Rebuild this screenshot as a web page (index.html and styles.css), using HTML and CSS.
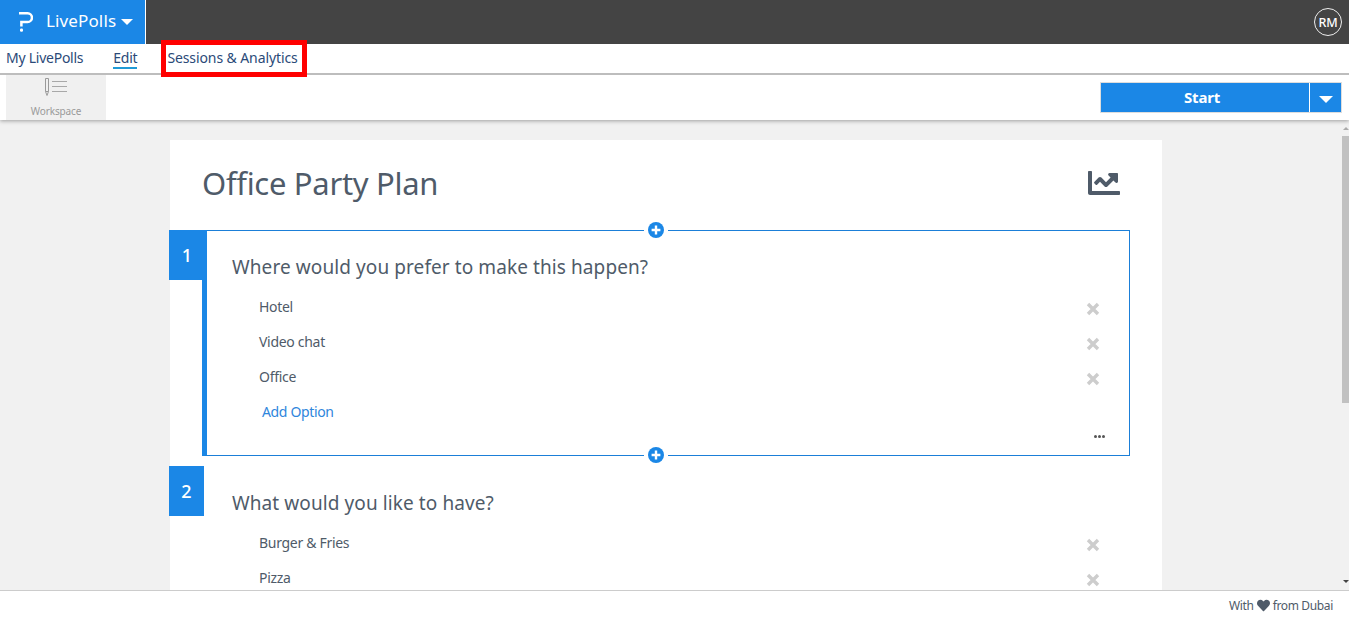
FILE: index.html
```html
<!DOCTYPE html>
<html lang="en">
<head>
<meta charset="utf-8">
<title>Office Party Plan</title>
<link rel="stylesheet" href="styles.css">
</head>
<body>
<div class="page">
  <header class="topbar">
    <div class="brand">
      <svg class="logo" viewBox="0 0 14 20" width="14" height="20"><path d="M0 1.3h8.6a4.3 4.3 0 0 1 0 8.7H2.4v4.6" fill="none" stroke="#fff" stroke-width="2.5"/><rect x="1" y="16.6" width="3" height="3.2" rx="1.2" fill="#fff"/></svg>
      <span class="brand-name">LivePolls</span>
      <span class="brand-caret"></span>
    </div>
    <div class="avatar">RM</div>
  </header>
  <nav class="tabs">
    <a class="tab tab-first">My LivePolls</a>
    <a class="tab tab-active">Edit</a>
    <a class="tab tab-marked">Sessions &amp; Analytics</a>
  </nav>
  <div class="toolbar">
    <div class="workspace">
      <svg class="workspace-icon" viewBox="0 0 24 20" width="24" height="20"><path d="M1.5 1.5h3v13l-1.5 4-1.5-4z" fill="none" stroke="#9a9a9a" stroke-width="1"/><path d="M1.5 14.5h3" stroke="#9a9a9a"/><path d="M8 4.5h15M8 9.5h15M8 14.5h15" stroke="#a8a8a8" stroke-width="1"/></svg>
      <span class="workspace-label">Workspace</span>
    </div>
    <div class="start">
      <button class="start-main">Start</button>
      <button class="start-more"><span class="start-caret"></span></button>
    </div>
  </div>
  <main class="main">
    <div class="content">
      <section class="card">
        <div class="card-head">
          <h1 class="title">Office Party Plan</h1>
          <svg class="chart" viewBox="0 0 512 512" width="32" height="32"><path fill="#4f5b69" d="M496 384H64V80c0-8.84-7.16-16-16-16H16C7.16 64 0 71.16 0 80v336c0 17.67 14.33 32 32 32h464c8.84 0 16-7.16 16-16v-32c0-8.84-7.16-16-16-16zM464 96H345.94c-21.38 0-32.09 25.85-16.97 40.97l32.4 32.4L288 242.75l-73.37-73.37c-12.5-12.5-32.76-12.5-45.25 0l-68.69 68.69c-6.25 6.25-6.25 16.38 0 22.63l22.62 22.62c6.25 6.25 16.38 6.25 22.63 0L192 237.25l73.37 73.37c12.5 12.5 32.76 12.5 45.25 0l96-96 32.4 32.4c15.12 15.12 40.97 4.41 40.97-16.97V112c0-8.84-7.16-16-16-16z"/></svg>
        </div>
        <article class="question question-active">
          <div class="num num-active">1</div>
          <span class="plus plus-top"><svg viewBox="0 0 16 16" width="16" height="16"><circle cx="8" cy="8" r="8" fill="#1b87e6"/><path d="M8 3.6v8.8M3.6 8h8.8" stroke="#fff" stroke-width="2.4"/></svg></span>
          <h2 class="q-title">Where would you prefer to make this happen?</h2>
          <div class="option"><span class="opt-text">Hotel</span><svg class="x" viewBox="0 0 14 14" width="14" height="14"><path d="M2 2l10 10M12 2L2 12" stroke="#cdcdcd" stroke-width="3.4"/></svg></div>
          <div class="option"><span class="opt-text">Video chat</span><svg class="x" viewBox="0 0 14 14" width="14" height="14"><path d="M2 2l10 10M12 2L2 12" stroke="#cdcdcd" stroke-width="3.4"/></svg></div>
          <div class="option"><span class="opt-text">Office</span><svg class="x" viewBox="0 0 14 14" width="14" height="14"><path d="M2 2l10 10M12 2L2 12" stroke="#cdcdcd" stroke-width="3.4"/></svg></div>
          <div class="option"><a class="add-option">Add Option</a></div>
          <div class="q-foot"><span class="dots"></span><span class="dots"></span><span class="dots"></span></div>
          <span class="plus plus-bottom"><svg viewBox="0 0 16 16" width="16" height="16"><circle cx="8" cy="8" r="8" fill="#1b87e6"/><path d="M8 3.6v8.8M3.6 8h8.8" stroke="#fff" stroke-width="2.4"/></svg></span>
        </article>
        <article class="question">
          <div class="num">2</div>
          <h2 class="q-title">What would you like to have?</h2>
          <div class="option"><span class="opt-text">Burger &amp; Fries</span><svg class="x" viewBox="0 0 14 14" width="14" height="14"><path d="M2 2l10 10M12 2L2 12" stroke="#cdcdcd" stroke-width="3.4"/></svg></div>
          <div class="option"><span class="opt-text">Pizza</span><svg class="x" viewBox="0 0 14 14" width="14" height="14"><path d="M2 2l10 10M12 2L2 12" stroke="#cdcdcd" stroke-width="3.4"/></svg></div>
        </article>
      </section>
    </div>
    <div class="scrollbar">
      <span class="arrow-up"></span>
      <span class="thumb"></span>
      <span class="arrow-down"></span>
    </div>
  </main>
  <footer class="footer"><span>With</span><svg class="heart" viewBox="0 0 512 512" width="13" height="13"><path fill="#4f5b69" d="M462.3 62.6C407.5 15.9 326 24.3 275.7 76.2L256 96.5l-19.7-20.3C186.1 24.3 104.5 15.9 49.7 62.6c-62.8 53.6-66.1 149.8-9.9 207.9l193.5 199.8c12.5 12.9 32.8 12.9 45.3 0l193.5-199.8c56.3-58.1 53-154.3-9.8-207.9z"/></svg><span>from Dubai</span></footer>
</div>
</body>
</html>
```
FILE: styles.css
```css
* { box-sizing: border-box; }
html, body { margin: 0; height: 100%; overflow: hidden; }
body { font-family: "Noto Sans", "Open Sans", sans-serif; color: #4f5b69; background: #fff; }
.page { height: 618px; display: flex; flex-direction: column; }

.topbar { height: 44px; flex: none; background: #444; display: flex; justify-content: space-between; align-items: center; }
.brand { width: 146px; height: 44px; background: #1b87e6; border-right: 1px solid #fff; display: flex; align-items: center; padding-left: 19px; color: #fff; }
.logo { margin-right: 13px; }
.brand-name { font-size: 17px; letter-spacing: 0.13px; margin-top: -3px; }
.brand-caret { width: 0; height: 0; margin-left: 5px; margin-top: 0; border-left: 6px solid transparent; border-right: 6px solid transparent; border-top: 6px solid #fff; }
.avatar { width: 28px; height: 28px; margin-right: 7px; border: 1px solid #eee; border-radius: 50%; color: #fff; font-size: 12.5px; font-weight: 500; display: flex; align-items: center; justify-content: center; letter-spacing: -0.3px; }

.tabs { height: 31px; flex: none; background: #fff; border-bottom: 2px solid #bdbdbd; display: flex; position: relative; z-index: 2; }
.tab { font-size: 14px; color: #2b4a78; line-height: 28px; height: 29px; letter-spacing: -0.25px; }
.tab-first { margin-left: 6px; }
.tab-active { margin-left: 30px; height: 25px; border-bottom: 2px solid #1f9ad6; }
.tab-marked { margin-left: 30px; letter-spacing: -0.1px; }
.tab-marked::before { content: ""; box-sizing: border-box; position: absolute; left: 161px; top: -4px; width: 146px; height: 37px; border: 5px solid #f00; }

.toolbar { height: 45px; flex: none; background: #fff; display: flex; justify-content: space-between; padding-right: 7px; box-shadow: 0 1px 4px rgba(0,0,0,.35); position: relative; z-index: 1; }
.workspace { margin-left: 6px; width: 100px; height: 45px; background: #f0f0f0; display: flex; flex-direction: column; align-items: center; }
.workspace-icon { margin-top: 2px; }
.workspace-label { font-size: 10px; color: #9a9a9a; margin-top: 7px; line-height: 14px; letter-spacing: -0.15px; }
.start { display: flex; height: 31px; margin-top: 7px; border: 1px solid #ddd; }
.start-main { width: 208px; border: 0; padding: 0 6px 2px 0; background: #1b87e6; color: #fff; font: 700 15px "Noto Sans", sans-serif; letter-spacing: -0.2px; }
.start-more { width: 32px; border: 0; border-left: 1px solid #fff; padding: 0; background: #1b87e6; display: flex; align-items: center; justify-content: center; }
.start-caret { width: 0; height: 0; margin-top: 3px; border-left: 7px solid transparent; border-right: 7px solid transparent; border-top: 7px solid #fff; }

.main { flex: 1; min-height: 0; background: #f1f1f1; display: flex; overflow: hidden; }
.content { flex: 1; min-width: 0; padding: 20px 0 0 170px; overflow: hidden; }
.card { width: 992px; background: #fff; padding: 0 32px; min-height: 600px; }
.card-head { height: 90px; display: flex; justify-content: space-between; align-items: flex-start; }
.title { margin: 22px 0 0; font-size: 31px; line-height: 42px; font-weight: 400; letter-spacing: -0.3px; color: #4f5b69; }
.chart { margin: 27px 10px 0 0; }

.question { position: relative; height: 226px; border: 1px solid transparent; border-left-width: 5px; margin-bottom: 10px; padding: 21px 0 0 25px; }
.question-active { border-color: #1b7fd8; border-left-color: #1b87e6; }
.num { position: absolute; left: -38px; top: -1px; width: 35px; height: 50px; background: #1b87e6; color: #fff; font-size: 18px; font-weight: 500; display: flex; align-items: center; justify-content: center; }
.num-active { width: 38px; padding-right: 2px; }
.plus { position: absolute; left: 437px; width: 24px; height: 16px; background: #fff; display: flex; justify-content: center; }
.plus-top { top: -9px; }
.plus-bottom { bottom: -8px; }

.q-title { margin: 0 0 8px; font-size: 19px; line-height: 30px; font-weight: 400; letter-spacing: 0.09px; color: #4f5b69; }
.option { height: 35px; display: flex; align-items: center; justify-content: space-between; padding: 0 29px 0 27px; }
.opt-text { font-size: 14px; letter-spacing: -0.3px; color: #4f5b69; margin-top: -3px; }
.x { margin-top: 3px; }
.add-option { font-size: 14px; color: #2f86dc; margin-left: 3px; margin-top: -3px; letter-spacing: -0.35px; }
.q-foot { display: flex; justify-content: flex-end; gap: 1px; padding: 5px 24px 0 0; }
.dots { width: 3px; height: 3px; border-radius: 50%; background: #555; }

.scrollbar { width: 7px; flex: none; background: #f1f1f1; display: flex; flex-direction: column; align-items: center; }
.arrow-up { margin-top: 7px; width: 0; height: 0; border-left: 3px solid transparent; border-right: 3px solid transparent; border-bottom: 3px solid #aaa; }
.thumb { margin-top: 6px; width: 7px; height: 267px; background: #c1c1c1; }
.arrow-down { margin-top: auto; margin-bottom: 7px; width: 0; height: 0; border-left: 3px solid transparent; border-right: 3px solid transparent; border-top: 3px solid #444; }

.footer { height: 28px; flex: none; background: #fff; border-top: 1px solid #ccc; display: flex; align-items: center; justify-content: flex-end; gap: 3px; padding: 1px 16px 0 0; font-size: 12px; letter-spacing: -0.35px; color: #4f5b69; }
.heart { display: block; }
```
